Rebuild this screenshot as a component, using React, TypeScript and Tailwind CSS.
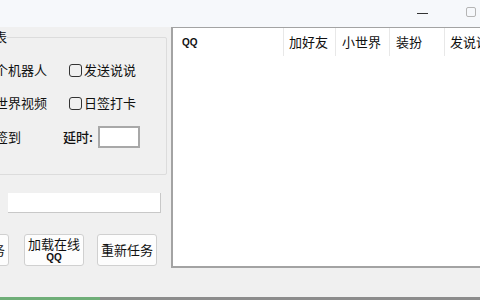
import React from 'react'

const font = { fontFamily: '"Noto Sans CJK SC", "Noto Sans", sans-serif' }

function Check({ label }: { label: string }) {
  return (
    <div className="flex items-center gap-[2px]">
      <span className="w-[13px] h-[13px] rounded-[3px] border border-[#333] bg-[#f0f0f0]" />
      <span>{label}</span>
    </div>
  )
}

function Btn({ children, className = '' }: { children: React.ReactNode; className?: string }) {
  return (
    <div
      className={`w-[60px] h-[32px] shrink-0 rounded-[3px] border border-[#d0d0d0] bg-[#fdfdfd] flex flex-col items-center justify-center leading-[14px] ${className}`}
    >
      {children}
    </div>
  )
}

const columns = [
  { label: 'QQ', w: 'w-[111px]', pl: 'pl-[9px]' },
  { label: '加好友', w: 'w-[52px]', pl: 'pl-[5px]' },
  { label: '小世界', w: 'w-[54px]', pl: 'pl-[6px]' },
  { label: '装扮', w: 'w-[55px]', pl: 'pl-[6px]' },
  { label: '发说说', w: 'w-[70px]', pl: 'pl-[5px]' },
]

export default function App() {
  return (
    <div
      className="w-[480px] h-[300px] overflow-hidden bg-[#f0f0f0] flex flex-col text-[13px] text-[#111]"
      style={font}
    >
      {/* 标题栏 */}
      <div className="h-[27px] shrink-0 bg-[#f6f8fb] flex items-center justify-end">
        <span className="w-[11px] h-[1px] bg-[#333] mr-[38px]" />
        <span className="w-[10px] h-[10px] rounded-[2px] border border-[#b5b5b5] mr-[4px] mb-[4px]" />
      </div>

      <div className="flex-1 flex min-h-0">
        {/* 左侧面板 */}
        <div className="w-[171px] shrink-0 overflow-hidden">
          <div className="-ml-[60px] w-[231px] flex flex-col">
            <div className="relative mt-[10px] w-[227px] h-[138px] border border-[#dcdcdc] rounded-[2px]">
              <span className="absolute -top-[10px] left-[14px] bg-[#f0f0f0] leading-[18px]">功能列表</span>
              <div className="flex flex-col pt-[22px] gap-[13px]">
                <div className="flex items-center h-[20px]">
                  <span className="w-[128px] pl-[28px]">加一个机器人</span>
                  <Check label="发送说说" />
                </div>
                <div className="flex items-center h-[20px]">
                  <span className="w-[128px] pl-[28px]">刷小世界视频</span>
                  <Check label="日签打卡" />
                </div>
                <div className="flex items-center h-[22px]">
                  <span className="w-[122px] pl-[28px]">每日签到</span>
                  <span className="font-medium">延时:</span>
                  <span className="ml-[5px] w-[42px] h-[22px] bg-white border-2 border-[#a8a8a8]" />
                </div>
              </div>
            </div>

            <div className="ml-[68px] mt-[18px] w-[153px] h-[20px] bg-white border-b border-r border-[#c8c8c8]" />

            <div className="flex mt-[21px] ml-[9px]">
              <Btn>开始任务</Btn>
              <Btn className="ml-[15px]">
                <span className="leading-[16px]">加载在线</span>
                <span className="text-[10px] leading-[12px] font-semibold" style={{ fontFamily: '"Liberation Sans", sans-serif' }}>QQ</span>
              </Btn>
              <Btn className="ml-[13px]">重新任务</Btn>
            </div>
          </div>
        </div>

        {/* 列表 */}
        <div className="w-[330px] shrink-0 h-[241px] bg-white border-l-2 border-t border-b-2 border-[#a3a3a3] flex flex-col">
          <div className="h-[28px] flex">
            {columns.map((c, i) => (
              <div
                key={c.label}
                className={`${c.w} ${c.pl} shrink-0 flex items-center ${i < columns.length - 1 ? 'border-r border-[#e8e8e8]' : ''}`}
              >
                {c.label === 'QQ' ? (
                  <span className="text-[10px] font-semibold" style={{ fontFamily: '"Liberation Sans", sans-serif' }}>
                    QQ
                  </span>
                ) : (
                  c.label
                )}
              </div>
            ))}
          </div>
        </div>
      </div>

      {/* 底部进度条 */}
      <div className="h-[3px] shrink-0 flex">
        <span className="w-[100px] bg-[#6fae78]" />
        <span className="flex-1 bg-[#8c8c8c]" />
      </div>
    </div>
  )
}
